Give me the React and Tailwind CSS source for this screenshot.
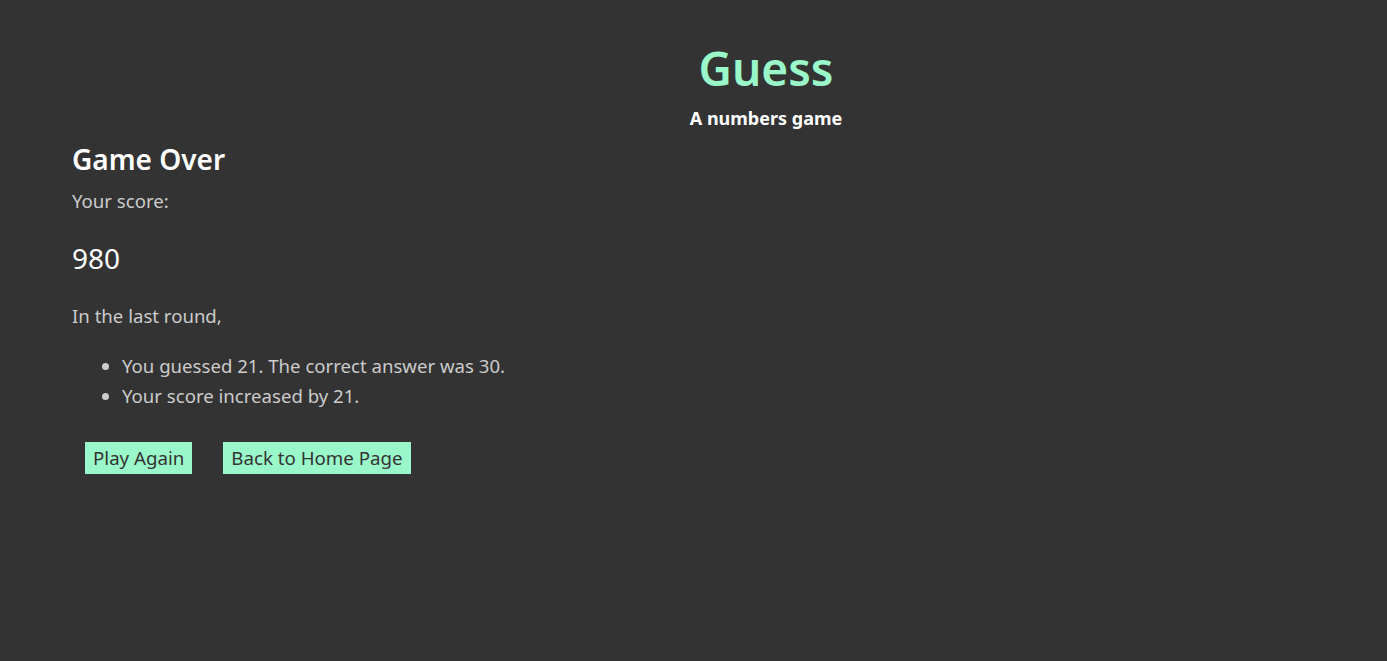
import React from 'react';

export default function App() {
    return (
        <div className="min-h-screen bg-[#333333] text-[#cccccc]" style={{ fontFamily: '"Noto Sans", "Open Sans", sans-serif' }}>
            <header className="pl-[145px] pt-[38px] text-center">
                <h1 className="text-[46px] leading-[60px] font-semibold text-[#9af7c9]">Guess</h1>
                <p className="mt-[7px] text-[18px] font-bold text-white">A numbers game</p>
            </header>

            <main className="px-[72px]">
                <h2 className="mt-[9px] text-[28px] font-semibold leading-[36px] text-white">Game Over</h2>
                <p className="mt-[10px] text-[18.6px] leading-[28px]">Your score:</p>
                <p className="mt-[25px] text-[28px] leading-[36px] text-white">980</p>
                <p className="mt-[26px] text-[18.6px] leading-[28px]">In the last round,</p>

                <ul className="mt-[21px] list-disc pl-[50px] text-[18.6px] leading-[30px]">
                    <li>You guessed 21. The correct answer was 30.</li>
                    <li>Your score increased by 21.</li>
                </ul>

                <div className="mt-[31px] flex gap-[31px] pl-[13px]">
                    <button className="h-[32px] bg-[#9af7c9] px-[8px] text-[18.7px] text-[#333333]">Play Again</button>
                    <button className="h-[32px] bg-[#9af7c9] px-[8px] text-[18.7px] text-[#333333]">Back to Home Page</button>
                </div>
            </main>
        </div>
    );
}
